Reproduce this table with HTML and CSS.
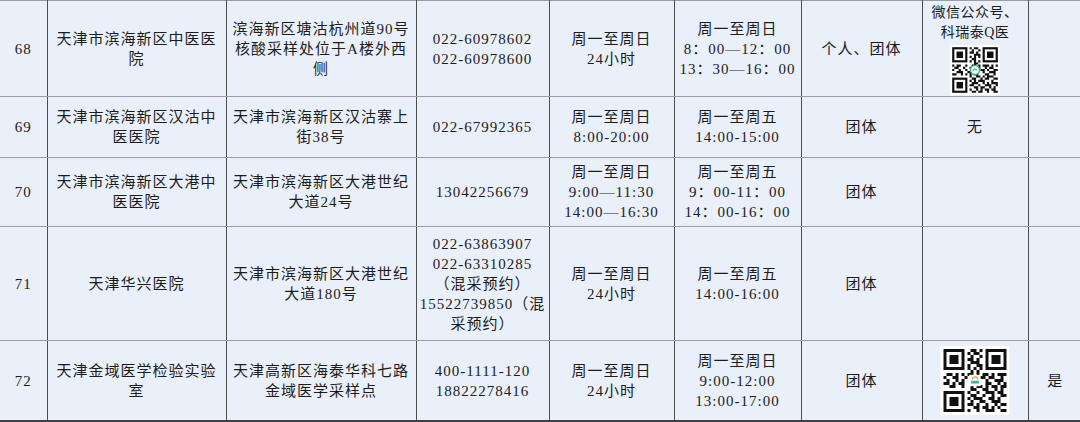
FILE: index.html
```html
<!DOCTYPE html>
<html lang="zh-CN">
<head>
<meta charset="utf-8">
<title>核酸采样点</title>
<link rel="stylesheet" href="styles.css">
</head>
<body>
<table class="sites">
  <colgroup>
    <col class="c-no"><col class="c-name"><col class="c-addr"><col class="c-tel"><col class="c-h1"><col class="c-h2"><col class="c-type"><col class="c-qr"><col class="c-last">
  </colgroup>
  <tr class="r68">
    <td>68</td>
    <td>天津市滨海新区中医医<br>院</td>
    <td>滨海新区塘沽杭州道90号<br>核酸采样处位于A楼外西<br>侧</td>
    <td>022-60978602<br>022-60978600</td>
    <td>周一至周日<br>24小时</td>
    <td>周一至周日<br>8：00—12：00<br>13：30—16：00</td>
    <td>个人、团体</td>
    <td class="qrcell">
      <div class="small">微信公众号、<br>科瑞泰Q医</div>
      <svg class="qr qr-s" viewBox="-1 -1 23 23" aria-hidden="true">
        <rect x="-1" y="-1" width="23" height="23" fill="#fff"/>
        <g fill="none" stroke="#111" stroke-width="1">
          <rect x="0.5" y="0.5" width="6" height="6"/><rect x="14.5" y="0.5" width="6" height="6"/><rect x="0.5" y="14.5" width="6" height="6"/>
          <path d="M8 .5h1M10 .5h2M9 1.5h1M12 1.5h1M8 2.5h2M11 2.5h1M10 3.5h3M8 4.5h1M10 4.5h1M12 4.5h1M9 5.5h2M8 6.5h1M10 6.5h1M12 6.5h1M10 7.5h2M0 8.5h1M2 8.5h2M6 8.5h1M9 8.5h2M12 8.5h1M14 8.5h3M18 8.5h1M20 8.5h1M1 9.5h2M5 9.5h1M8 9.5h1M10 9.5h3M15 9.5h1M17 9.5h2M0 10.5h1M3 10.5h1M6 10.5h1M9 10.5h1M13 10.5h2M16 10.5h1M19 10.5h2M2 11.5h3M7 11.5h2M11 11.5h1M14 11.5h1M17 11.5h3M0 12.5h2M4 12.5h1M6 12.5h1M8 12.5h1M10 12.5h2M15 12.5h2M19 12.5h1M8 13.5h1M11 13.5h2M14 13.5h1M16 13.5h3M9 14.5h2M13 14.5h1M15 14.5h2M19 14.5h2M8 15.5h1M10 15.5h1M12 15.5h3M18 15.5h1M9 16.5h3M14 16.5h1M16 16.5h1M18 16.5h3M8 17.5h2M12 17.5h1M15 17.5h3M20 17.5h1M10 18.5h2M13 18.5h2M17 18.5h1M19 18.5h1M8 19.5h1M11 19.5h1M13 19.5h1M15 19.5h2M18 19.5h2M9 20.5h2M12 20.5h2M16 20.5h1M19 20.5h2"/>
        </g>
        <g fill="#111"><rect x="2" y="2" width="3" height="3"/><rect x="16" y="2" width="3" height="3"/><rect x="2" y="16" width="3" height="3"/></g>
        <circle cx="10.5" cy="10.5" r="2.1" fill="#fff" stroke="#3fae8c" stroke-width="0.7"/>
        <path d="M9.4 10.9l1-0.9 1.2 0.5" fill="none" stroke="#3fae8c" stroke-width="0.5"/>
      </svg>
    </td>
    <td></td>
  </tr>
  <tr class="r69">
    <td>69</td>
    <td>天津市滨海新区汉沽中<br>医医院</td>
    <td>天津市滨海新区汉沽寨上<br>街38号</td>
    <td>022-67992365</td>
    <td>周一至周日<br>8:00-20:00</td>
    <td>周一至周五<br>14:00-15:00</td>
    <td>团体</td>
    <td>无</td>
    <td></td>
  </tr>
  <tr class="r70">
    <td>70</td>
    <td>天津市滨海新区大港中<br>医医院</td>
    <td>天津市滨海新区大港世纪<br>大道24号</td>
    <td>13042256679</td>
    <td>周一至周日<br>9:00—11:30<br>14:00—16:30</td>
    <td>周一至周五<br>9：00-11：00<br>14：00-16：00</td>
    <td>团体</td>
    <td></td>
    <td></td>
  </tr>
  <tr class="r71">
    <td>71</td>
    <td>天津华兴医院</td>
    <td>天津市滨海新区大港世纪<br>大道180号</td>
    <td>022-63863907<br>022-63310285<br>（混采预约）<br>15522739850（混<br>采预约）</td>
    <td>周一至周日<br>24小时</td>
    <td>周一至周五<br>14:00-16:00</td>
    <td>团体</td>
    <td></td>
    <td></td>
  </tr>
  <tr class="r72">
    <td>72</td>
    <td>天津金域医学检验实验<br>室</td>
    <td>天津高新区海泰华科七路<br>金域医学采样点</td>
    <td>400-1111-120<br>18822278416</td>
    <td>周一至周日<br>24小时</td>
    <td>周一至周日<br>9:00-12:00<br>13:00-17:00</td>
    <td>团体</td>
    <td class="qrcell">
      <svg class="qr qr-l" viewBox="-1 -1 23 23" aria-hidden="true">
        <rect x="-1" y="-1" width="23" height="23" fill="#fff"/>
        <g fill="none" stroke="#111" stroke-width="1">
          <rect x="0.5" y="0.5" width="6" height="6"/><rect x="14.5" y="0.5" width="6" height="6"/><rect x="0.5" y="14.5" width="6" height="6"/>
          <path d="M9 .5h2M12 .5h1M8 1.5h1M10 1.5h2M9 2.5h1M12 2.5h1M8 3.5h2M11 3.5h1M9 4.5h3M8 5.5h1M11 5.5h2M8 6.5h1M10 6.5h1M12 6.5h1M9 7.5h1M11 7.5h1M1 8.5h2M4 8.5h1M6 8.5h1M8 8.5h2M11 8.5h1M13 8.5h2M16 8.5h1M18 8.5h3M0 9.5h1M3 9.5h2M7 9.5h1M10 9.5h1M12 9.5h2M15 9.5h2M19 9.5h1M1 10.5h1M4 10.5h1M6 10.5h1M14 10.5h1M17 10.5h3M0 11.5h2M3 11.5h1M5 11.5h2M14 11.5h2M18 11.5h1M20 11.5h1M2 12.5h2M6 12.5h1M9 12.5h1M11 12.5h2M14 12.5h1M16 12.5h2M19 12.5h2M9 13.5h2M13 13.5h2M17 13.5h1M19 13.5h1M8 14.5h1M11 14.5h1M14 14.5h3M18 14.5h2M9 15.5h2M13 15.5h1M16 15.5h1M19 15.5h2M8 16.5h1M10 16.5h3M15 16.5h2M18 16.5h1M9 17.5h1M12 17.5h2M16 17.5h3M8 18.5h2M11 18.5h1M14 18.5h1M17 18.5h1M19 18.5h2M10 19.5h2M13 19.5h2M16 19.5h1M18 19.5h1M8 20.5h1M11 20.5h1M14 20.5h3M19 20.5h2"/>
        </g>
        <g fill="#111"><rect x="2" y="2" width="3" height="3"/><rect x="16" y="2" width="3" height="3"/><rect x="2" y="16" width="3" height="3"/></g>
        <rect x="8.6" y="8.6" width="3.8" height="3.8" fill="#fff"/>
        <path d="M9.6 10.2a0.9 0.9 0 0 1 1.8 0" fill="none" stroke="#f0a030" stroke-width="0.45"/>
        <rect x="9.2" y="10.6" width="2.6" height="0.9" fill="#3bb3a4"/>
      </svg>
    </td>
    <td>是</td>
  </tr>
</table>
</body>
</html>
```

FILE: styles.css
```css
html, body {
  margin: 0;
  padding: 0;
  background: #e9f0f9;
  overflow: hidden;
}

.sites {
  border-collapse: collapse;
  table-layout: fixed;
  width: 1082px;
  font-family: "Liberation Serif", "Noto Sans CJK SC", serif;
  font-size: 15px;
  letter-spacing: 1px;
  line-height: 20px;
  color: #1c1c1c;
  background: #e9f0f9;
}

.c-no { width: 47px; }
.c-name { width: 179px; }
.c-addr { width: 190px; }
.c-tel { width: 133px; }
.c-h1 { width: 125px; }
.c-h2 { width: 127px; }
.c-type { width: 121px; }
.c-qr { width: 106px; }
.c-last { width: 54px; }

.sites td {
  padding: 0 2px;
  text-align: center;
  vertical-align: middle;
  white-space: nowrap;
  border-top: 1px solid #9a9ea4;
  border-bottom: 1px solid #9a9ea4;
  border-left: 1px solid #4d4f53;
  border-right: 1px solid #4d4f53;
  overflow: hidden;
}

.sites td:first-child { border-left: none; }
.sites td:last-child { border-right: none; }

.r68 td { height: 95px; }
.r69 td { height: 60px; }
.r70 td { height: 68px; }
.r71 td { height: 113px; }
.r72 td { height: 79px; border-bottom: 2px solid #3d3f43; }

.qrcell .small {
  font-size: 14px;
  letter-spacing: 0.5px;
  line-height: 20px;
}

.qr { display: block; margin: 0 auto; }
.qr-s { width: 50px; height: 50px; margin-top: 2px; }
.qr-l { width: 70px; height: 69px; }
```
